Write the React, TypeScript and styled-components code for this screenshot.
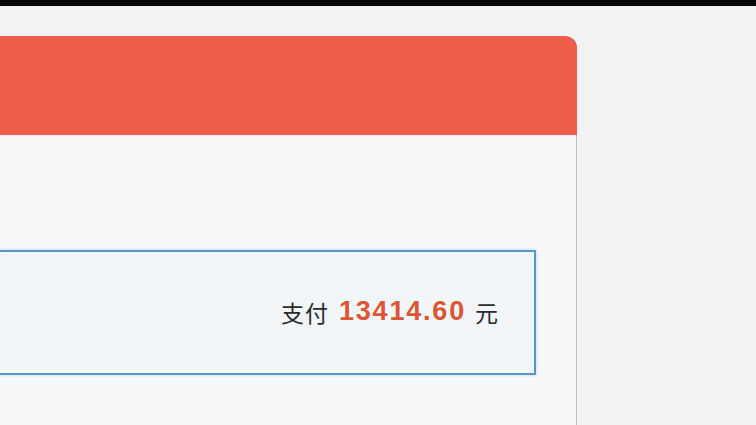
import React from "react";
import styled, { createGlobalStyle } from "styled-components";

const Global = createGlobalStyle`
  html, body { margin: 0; padding: 0; height: 100%; background: #f2f2f4; overflow: hidden; }
  body { font-family: "Liberation Sans", Arial, "Noto Sans CJK SC", sans-serif; }
  #root { height: 100%; display: flex; flex-direction: column; }
`;

const TopBar = styled.div`
  height: 6px;
  flex: none;
  background: #050505;
`;

const Stage = styled.div`
  flex: 1;
  padding-top: 30px;
  display: flex;
  flex-direction: column;
`;

const Card = styled.section`
  flex: 1;
  width: 577px;
  box-sizing: border-box;
  background: #f7f8fa;
  border-right: 1px solid #bdbdc0;
  border-radius: 0 12px 0 0;
  display: flex;
  flex-direction: column;
`;

const Header = styled.header`
  height: 99px;
  background: #ee5e4a;
  border-radius: 0 12px 0 0;
  margin-right: -1px;
  box-shadow: 0 1px 1px rgba(0, 0, 0, 0.06);
`;

const Body = styled.div`
  padding-top: 115px;
  padding-right: 40px;
`;

const PayBox = styled.div`
  height: 125px;
  box-sizing: border-box;
  border: 2px solid #5597c6;
  border-left: none;
  background: #f3f6f9;
  box-shadow: 0 0 3px rgba(120, 180, 230, 0.5);
  display: flex;
  align-items: center;
  justify-content: flex-end;
  padding-right: 36px;
  padding-bottom: 2px;
`;

const Label = styled.span<{ $spacing?: number }>`
  font-family: "Noto Sans CJK SC", "Liberation Sans", sans-serif;
  font-size: 23px;
  color: #2b2b30;
  letter-spacing: ${(p) => p.$spacing ?? 0}px;
`;

const Amount = styled.span`
  font-family: "Liberation Sans", Arial, sans-serif;
  font-weight: 700;
  font-size: 27px;
  letter-spacing: 1.8px;
  color: #dc5636;
  margin: 0 9px 0 10px;
`;

export default function App() {
  return (
    <>
      <Global />
      <TopBar />
      <Stage>
        <Card>
          <Header />
          <Body>
            <PayBox>
              <Label $spacing={1}>支付</Label>
              <Amount>13414.60</Amount>
              <Label>元</Label>
            </PayBox>
          </Body>
        </Card>
      </Stage>
    </>
  );
}
